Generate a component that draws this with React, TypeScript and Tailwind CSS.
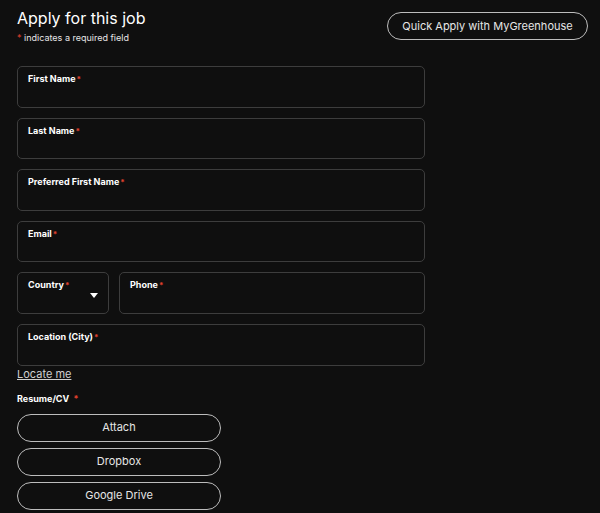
import React from 'react';

const Field = ({ label, className = '', select = false }: { label: string; className?: string; select?: boolean }) => (
  <div className={`relative h-[41.6px] rounded-[5px] border border-[#3d3d3d] pl-[10px] pt-[6px] ${className}`}>
    <div className="text-[9px] font-bold leading-[12px] text-white">
      {label}
      <span className="ml-[1px] align-top text-[8px] text-[#e0412e]">*</span>
    </div>
    {select && (
      <svg className="absolute right-[10px] top-[20px]" width="8" height="6" viewBox="0 0 8 6">
        <path d="M0 0 H8 L4 5 Z" fill="white" />
      </svg>
    )}
  </div>
);

const PillButton = ({ children }: { children: React.ReactNode }) => (
  <button className="h-[28px] w-[204px] rounded-full border border-[#bdbdbd] text-[11px] text-[#e6e6e6]">
    {children}
  </button>
);

export default function App() {
  return (
    <div
      className="h-[513px] w-[600px] overflow-hidden bg-[#0f0f0f] text-white"
      style={{ fontFamily: 'Inter, "Noto Sans", sans-serif' }}
    >
      <div className="flex justify-between pl-[17px] pr-[12px]">
        <div className="pt-[6px]">
          <h1 className="text-[16px] leading-[24px] font-normal text-white">Apply for this job</h1>
          <p className="mt-[2px] text-[9px] leading-[12px] text-[#e6e6e6]">
            <span className="text-[#e0412e]">*</span> indicates a required field
          </p>
        </div>
        <button className="mt-[12px] h-[28px] w-[201px] rounded-full border border-[#bdbdbd] text-[11px] text-[#e6e6e6]">
          Quick Apply with MyGreenhouse
        </button>
      </div>

      <div className="mt-[22px] flex w-[425px] flex-col gap-[10px] pl-[17px]">
        <Field label="First Name" />
        <Field label="Last Name" />
        <Field label="Preferred First Name" />
        <Field label="Email" />
        <div className="flex gap-[10px]">
          <Field label="Country" className="w-[92px]" select />
          <Field label="Phone" className="flex-1" />
        </div>
        <Field label="Location (City)" />
      </div>

      <div className="pl-[17px]">
        <a className="mt-[1px] block w-fit text-[11px] leading-[14px] text-[#cfcfcf] underline">Locate me</a>
        <div className="mt-[12px] text-[9px] font-bold leading-[12px] text-white">
          Resume/CV <span className="ml-[2px] text-[#e0412e]">*</span>
        </div>
        <div className="mt-[9px] flex flex-col gap-[6px]">
          <PillButton>Attach</PillButton>
          <PillButton>Dropbox</PillButton>
          <PillButton>Google Drive</PillButton>
        </div>
      </div>
    </div>
  );
}
